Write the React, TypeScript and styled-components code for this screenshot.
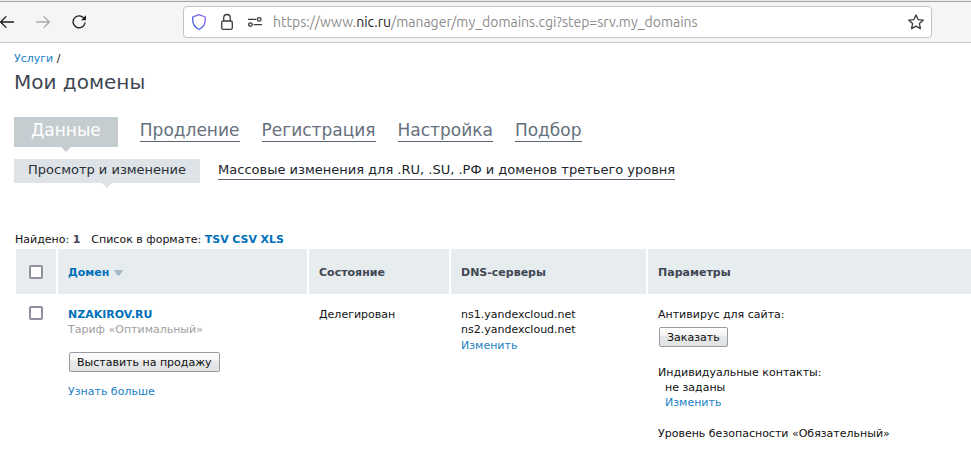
import React from "react";
import styled, { createGlobalStyle, css } from "styled-components";

const GlobalStyle = createGlobalStyle`
  *, *::before, *::after { box-sizing: border-box; }
  body {
    margin: 0;
    background: #fff;
    color: #111;
    font: 11px/15px "DejaVu Sans", Verdana, sans-serif;
  }
`;

const Toolbar = styled.header`
  display: flex;
  align-items: center;
  height: 43px;
  padding: 2px 39px 0 0;
  background: #f5f5f5;
  border-bottom: 1px solid #c9c9c9;
  box-shadow: inset 0 1px #e8e8e5, inset 0 2px #a4a4a2;
`;

const NavButtons = styled.nav`
  display: flex;
  gap: 20px;
  width: 183px;
  flex: none;
`;

const IconButton = styled.button<{ $faded?: boolean }>`
  display: flex;
  padding: 0;
  border: 0;
  background: none;
  color: ${(p) => (p.$faded ? "#a9a9a9" : "#1c1c1e")};
`;

const AddressBar = styled.div`
  display: flex;
  align-items: center;
  flex: 1;
  min-width: 0;
  height: 32px;
  padding: 0 7px;
  border: 1px solid #c3c3c3;
  border-radius: 4px;
  background: #fff;
`;

const SiteIcons = styled.div`
  display: flex;
  gap: 12px;
  margin-right: 10px;
`;

const Address = styled.div`
  flex: 1;
  overflow: hidden;
  white-space: nowrap;
  color: #8c8c8c;
  font: 14px/20px Ubuntu, "Noto Sans", sans-serif;

  b {
    color: #222;
    font-weight: 400;
  }
`;

const Page = styled.main`
  padding: 8px 0 0 14px;
`;

const Link = styled.a<{ $strong?: boolean }>`
  color: ${(p) => (p.$strong ? "#0070ba" : "#1a7fc4")};
  font-weight: ${(p) => (p.$strong ? 700 : 400)};
  text-decoration: none;
`;

const Title = styled.h1`
  margin: 4px 0 0;
  color: #3f4753;
  font-size: 20px;
  font-weight: 400;
  line-height: 24px;
`;

const pointer = css<{ $color: string }>`
  position: relative;
  background: ${(p) => p.$color};

  &::after {
    content: "";
    position: absolute;
    top: 100%;
    left: 50%;
    margin-left: -5px;
    border: 5px solid transparent;
    border-top-color: ${(p) => p.$color};
    border-bottom: 0;
  }
`;

const Tabs = styled.nav`
  display: flex;
  align-items: flex-start;
  gap: 22px;
  margin-top: 23px;
  font-size: 17px;
  line-height: 24px;
`;

const ActiveTab = styled.a`
  ${pointer}
  height: 30px;
  padding: 1px 17px 0;
  color: #fff;
  text-decoration: none;
`;

const Tab = styled.a`
  border-bottom: 1px solid #5b6675;
  padding-top: 1px;
  height: 25px;
  color: #65707c;
  text-decoration: none;
`;

const SubTabs = styled(Tabs)`
  gap: 18px;
  margin-top: 12px;
  font-size: 13px;
  line-height: 20px;
`;

const ActiveSubTab = styled.a`
  ${pointer}
  height: 24px;
  padding: 1px 14px 0;
  color: #2b2f36;
  text-decoration: none;
`;

const SubTab = styled(Tab)`
  height: 21px;
  color: #20252c;
`;

const Summary = styled.p`
  display: flex;
  gap: 11px;
  margin: 49px 0 2px 1px;

  b {
    color: #3f4753;
  }
`;

const DomainTable = styled.table`
  width: calc(100% - 2px);
  margin-left: 2px;
  table-layout: fixed;
  border-collapse: separate;
  border-spacing: 0;
`;

const Col = styled.col<{ $width?: number }>`
  width: ${(p) => (p.$width ? `${p.$width}px` : "auto")};
`;

const HeadCell = styled.th`
  height: 45px;
  padding: 1px 10px 0;
  border-right: 2px solid #fff;
  background: #e7ecef;
  background-clip: padding-box;
  color: #3f4753;
  text-align: left;

  &:last-child {
    border-right: 0;
  }
`;

const Cell = styled.td<{ $top?: number }>`
  padding: ${(p) => p.$top ?? 13}px 10px 0;
  vertical-align: top;
`;

const Checkbox = styled.input.attrs({ type: "checkbox" })`
  appearance: none;
  display: block;
  width: 14px;
  height: 14px;
  margin: 0 3px;
  border: 2px solid #8f8f9d;
  border-radius: 2px;
  background: #fff;
`;

const SortLink = styled(Link)`
  display: flex;
  align-items: center;
  gap: 5px;
`;

const Block = styled.div<{ $gap?: number; $indent?: boolean }>`
  margin-top: ${(p) => p.$gap ?? 0}px;
  padding-left: ${(p) => (p.$indent ? 7 : 0)}px;
`;

const Muted = styled.div`
  color: #9e9e9e;
`;

const PushButton = styled.button`
  display: block;
  height: 20px;
  margin-left: 1px;
  padding: 0 7px;
  border: 1px solid #989ba3;
  border-radius: 2px;
  background: linear-gradient(#fff 0, #f5f5f5 40%, #e6e7e9 45%, #e2e3e5 100%);
  color: #111;
  font: inherit;
`;

const BackIcon = () => (
  <svg width="16" height="16" viewBox="0 0 16 16" fill="none" stroke="currentColor" strokeWidth="1.3" strokeLinecap="round" strokeLinejoin="round">
    <path d="M13.5 8H.6M6 2.6.6 8 6 13.4" />
  </svg>
);

const ForwardIcon = () => (
  <svg width="16" height="16" viewBox="0 0 16 16" fill="none" stroke="currentColor" strokeWidth="1.3" strokeLinecap="round" strokeLinejoin="round">
    <path d="M.6 8h12.8M8 2.6 13.4 8 8 13.4" />
  </svg>
);

const ReloadIcon = () => (
  <svg width="16" height="16" viewBox="0 0 16 16" fill="none">
    <path d="M11.600 3.900A6 6 0 1 0 13 9" stroke="currentColor" strokeWidth="1.3" strokeLinecap="round" />
    <path d="M14 1.300v5H9z" fill="currentColor" />
  </svg>
);

const ShieldIcon = () => (
  <svg width="16" height="18" viewBox="0 0 16 18" fill="none">
    <defs>
      <linearGradient id="shield" x1="0" y1="1" x2="1" y2="0">
        <stop offset="0" stopColor="#2c5ce0" />
        <stop offset="1" stopColor="#9b63f2" />
      </linearGradient>
    </defs>
    <path d="M8 1.6 14.3 4v2.600c0 4.600-2.300 8-6.300 9.900-4-1.900-6.300-5.300-6.300-9.900V4z" stroke="url(#shield)" strokeWidth="1.3" strokeLinejoin="round" />
  </svg>
);

const LockIcon = () => (
  <svg width="16" height="18" viewBox="0 0 16 18" fill="none" stroke="#3b3b3f" strokeWidth="1.3">
    <rect x="2.7" y="8" width="10.6" height="8.3" rx="1.6" />
    <path d="M4.7 8V4.8a3.3 3.3 0 0 1 6.6 0V8" />
  </svg>
);

const PermissionsIcon = () => (
  <svg width="16" height="18" viewBox="0 0 16 18" fill="none" stroke="#3b3b3f" strokeWidth="1.3">
    <path d="M1 6.4h8.4M6.6 11.6H15" />
    <circle cx="12.2" cy="6.4" r="1.8" />
    <circle cx="3.4" cy="11.6" r="1.8" />
  </svg>
);

const StarIcon = () => (
  <svg width="16" height="16" viewBox="0 0 16 16" fill="none" stroke="#3b3b3f" strokeWidth="1.3" strokeLinejoin="round">
    <path d="M8 1 10.1 5.6 15.2 6.2 11.4 9.6 12.4 14.6 8 12.1 3.6 14.6 4.6 9.6.8 6.2 5.9 5.6z" />
  </svg>
);

const SortIcon = () => (
  <svg width="9" height="7" viewBox="0 0 9 7" fill="#a3b9c4">
    <path d="M0 1h9L5.5 6.5h-2z" />
  </svg>
);

export default function App() {
  return (
    <>
      <GlobalStyle />
      <Toolbar>
        <NavButtons>
          <IconButton aria-label="Назад"><BackIcon /></IconButton>
          <IconButton $faded aria-label="Вперёд"><ForwardIcon /></IconButton>
          <IconButton aria-label="Обновить"><ReloadIcon /></IconButton>
        </NavButtons>
        <AddressBar>
          <SiteIcons>
            <IconButton aria-label="Защита"><ShieldIcon /></IconButton>
            <IconButton aria-label="Соединение"><LockIcon /></IconButton>
            <IconButton aria-label="Разрешения"><PermissionsIcon /></IconButton>
          </SiteIcons>
          <Address>
            https://www.<b>nic.ru</b>/manager/my_domains.cgi?step=srv.my_domains
          </Address>
          <IconButton aria-label="Добавить в закладки"><StarIcon /></IconButton>
        </AddressBar>
      </Toolbar>
      <Page>
        <div><Link href="#services">Услуги</Link> /</div>
        <Title>Мои домены</Title>
        <Tabs>
          <ActiveTab href="#data" $color="#c5cdd0">Данные</ActiveTab>
          <Tab href="#renew">Продление</Tab>
          <Tab href="#register">Регистрация</Tab>
          <Tab href="#settings">Настройка</Tab>
          <Tab href="#search">Подбор</Tab>
        </Tabs>
        <SubTabs>
          <ActiveSubTab href="#view" $color="#dde3e7">Просмотр и изменение</ActiveSubTab>
          <SubTab href="#bulk">Массовые изменения для .RU, .SU, .РФ и доменов третьего уровня</SubTab>
        </SubTabs>
        <Summary>
          <span>Найдено: <b>1</b></span>
          <span>
            Список в формате: <Link $strong href="#tsv">TSV</Link>{" "}
            <Link $strong href="#csv">CSV</Link> <Link $strong href="#xls">XLS</Link>
          </span>
        </Summary>
        <DomainTable>
          <colgroup>
            <Col $width={42} />
            <Col $width={251} />
            <Col $width={142} />
            <Col $width={197} />
            <Col />
          </colgroup>
          <thead>
            <tr>
              <HeadCell><Checkbox aria-label="Выбрать все домены" /></HeadCell>
              <HeadCell><SortLink $strong href="#sort">Домен <SortIcon /></SortLink></HeadCell>
              <HeadCell>Состояние</HeadCell>
              <HeadCell>DNS-серверы</HeadCell>
              <HeadCell>Параметры</HeadCell>
            </tr>
          </thead>
          <tbody>
            <tr>
              <Cell $top={12}><Checkbox aria-label="Выбрать NZAKIROV.RU" /></Cell>
              <Cell>
                <Link $strong href="#domain">NZAKIROV.RU</Link>
                <Muted>Тариф «Оптимальный»</Muted>
                <Block $gap={15}><PushButton>Выставить на продажу</PushButton></Block>
                <Block $gap={12}><Link href="#more">Узнать больше</Link></Block>
              </Cell>
              <Cell>Делегирован</Cell>
              <Cell>
                <div>ns1.yandexcloud.net</div>
                <div>ns2.yandexcloud.net</div>
                <Block $gap={1}><Link href="#dns">Изменить</Link></Block>
              </Cell>
              <Cell>
                <div>Антивирус для сайта:</div>
                <Block $gap={5}><PushButton>Заказать</PushButton></Block>
                <Block $gap={18}>Индивидуальные контакты:</Block>
                <Block $indent>не заданы</Block>
                <Block $indent><Link href="#contacts">Изменить</Link></Block>
                <Block $gap={16}>Уровень безопасности «Обязательный»</Block>
              </Cell>
            </tr>
          </tbody>
        </DomainTable>
      </Page>
    </>
  );
}
